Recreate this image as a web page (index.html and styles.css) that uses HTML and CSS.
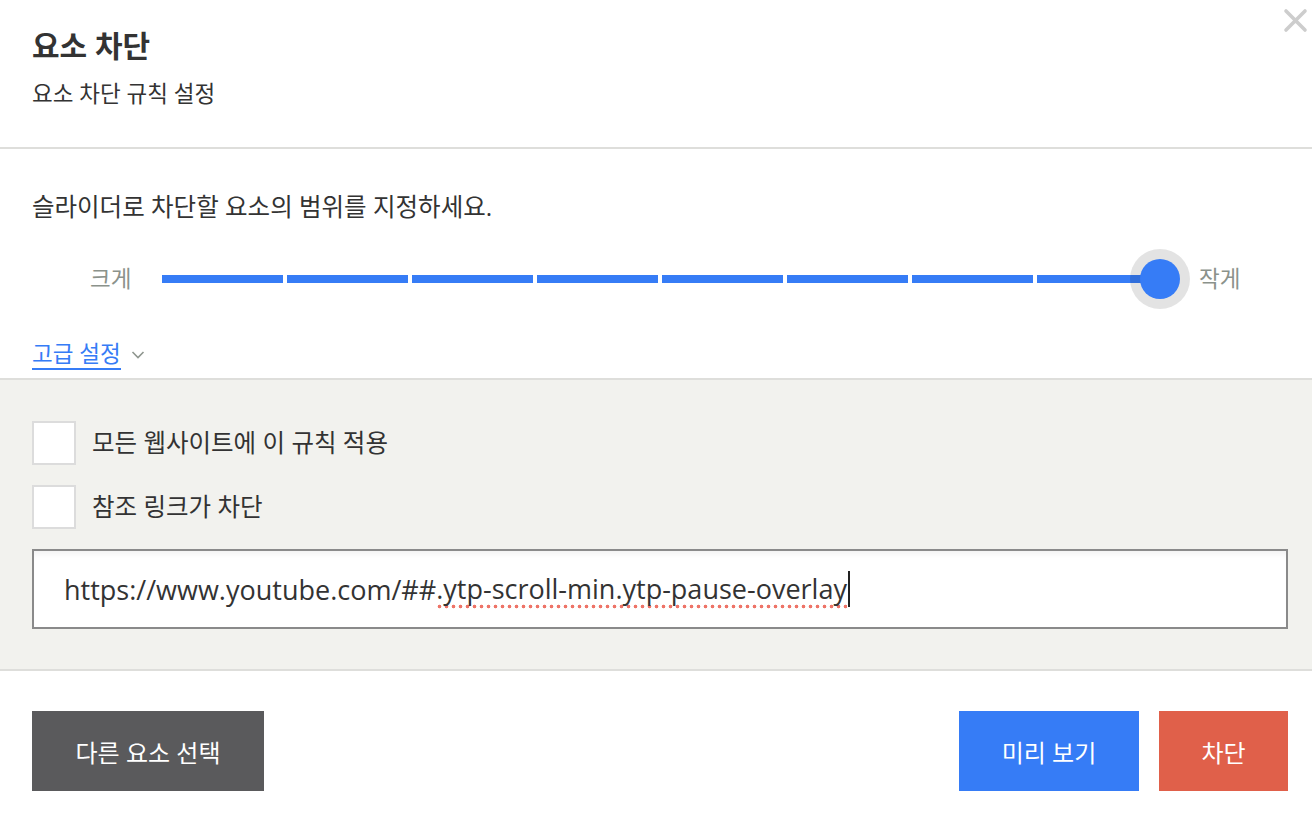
FILE: index.html
```html
<!DOCTYPE html>
<html lang="ko">
<head>
<meta charset="utf-8">
<title>요소 차단</title>
<link rel="stylesheet" href="styles.css">
</head>
<body>
<div class="dialog">
  <button class="close" aria-label="닫기">
    <svg width="25" height="25" viewBox="0 0 25 25"><path d="M3 3 L22 22 M22 3 L3 22" stroke="#cdcdcd" stroke-width="3.6" stroke-linecap="round" fill="none"/></svg>
  </button>
  <header class="head">
    <h1 class="title">요소 차단</h1>
    <p class="subtitle">요소 차단 규칙 설정</p>
  </header>
  <section class="main">
    <p class="hint">슬라이더로 차단할 요소의 범위를 지정하세요.</p>
    <div class="slider">
      <span class="slabel">크게</span>
      <div class="track">
        <span class="seg"></span><span class="seg"></span><span class="seg"></span><span class="seg"></span>
        <span class="seg"></span><span class="seg"></span><span class="seg"></span><span class="seg"></span>
        <span class="thumb"><span class="knob"></span></span>
      </div>
      <span class="slabel right">작게</span>
    </div>
    <div class="adv">
      <a class="advlink">고급 설정</a>
      <svg class="chev" width="14" height="10" viewBox="0 0 14 10"><path d="M1.5 2 L7 7.5 L12.5 2" stroke="#8f968f" stroke-width="1.6" fill="none"/></svg>
    </div>
  </section>
  <section class="advanced">
    <label class="check"><span class="box"></span><span class="ctext">모든 웹사이트에 이 규칙 적용</span></label>
    <label class="check"><span class="box"></span><span class="ctext">참조 링크가 차단</span></label>
    <div class="field">https://www.youtube.com/##<span class="spell">.ytp-scroll-min.ytp-pause-overlay</span><span class="caret"></span></div>
  </section>
  <footer class="foot">
    <button class="btn dark">다른 요소 선택</button>
    <div class="spacer"></div>
    <button class="btn blue">미리 보기</button>
    <button class="btn red">차단</button>
  </footer>
</div>
</body>
</html>
```
FILE: styles.css
```css
* { box-sizing: border-box; }
html, body { margin: 0; padding: 0; background: #fff; }
body {
  font-family: "Open Sans", "Noto Sans CJK KR", sans-serif;
  color: #333;
  width: 1312px;
  height: 822px;
  overflow: hidden;
}
.dialog { position: relative; width: 1312px; }
.close {
  position: absolute; top: 8px; right: 4px;
  width: 25px; height: 25px; padding: 0; border: 0; background: none;
}
.close svg { display: block; }
.head {
  padding: 29px 32px 38px;
  border-bottom: 2px solid #dededb;
}
.title {
  margin: 0; font-size: 30px; line-height: 34px; font-weight: 700; color: #333;
}
.subtitle {
  margin: 16px 0 0; font-size: 22.5px; line-height: 30px; color: #333;
}
.main { padding: 42px 32px 8px; }
.hint { margin: 0; font-size: 24.5px; line-height: 32px; }
.slider {
  display: flex; align-items: center; height: 60px; margin-top: 26px;
}
.slabel { font-size: 22.5px; color: #8b928b; margin-left: 58px; width: 42px; line-height: 30px; white-space: nowrap; }
.slabel.right { margin-left: 41px; }
.track {
  position: relative; display: flex; gap: 4px; width: 996px; height: 8px; margin-left: 30px;
}
.seg { flex: 1; background: #367cf6; }
.thumb {
  position: absolute; top: 50%; left: calc(100% + 2px);
  width: 60px; height: 60px; margin: -30px 0 0 -30px;
  border-radius: 50%; background: rgba(0,0,0,0.11);
  display: flex; align-items: center; justify-content: center;
}
.thumb::before {
  content: ""; position: absolute; left: 0; top: 26px; width: 30px; height: 8px; background: #367cf6; z-index: -1;
}
.knob { width: 40px; height: 40px; border-radius: 50%; background: #367cf6; }
.adv { display: flex; align-items: center; margin-top: 31px; gap: 10px; }
.advlink {
  font-size: 22.5px; line-height: 28px; color: #367cf6; border-bottom: 2px solid #367cf6; cursor: pointer;
}
.advanced {
  background: #f2f2ee;
  border-top: 2px solid #dededb;
  border-bottom: 2px solid #dededb;
  padding: 41px 24px 40px 32px;
  display: flex; flex-direction: column; gap: 20px;
}
.check { display: flex; align-items: center; gap: 16px; height: 44px; }
.box { width: 44px; height: 44px; background: #fff; border: 2px solid #dcdcdc; flex: none; }
.ctext { font-size: 24.5px; line-height: 30px; }
.field {
  height: 80px; background: #fff; border: 2px solid #8a8a8a;
  box-shadow: inset 0 8px 8px -6px rgba(0,0,0,0.07);
  padding: 0 30px; display: flex; align-items: center;
  font-size: 27px; color: #333; white-space: nowrap;
}
.spell {
  background-image: radial-gradient(circle, #ee7468 1.7px, transparent 2.1px);
  background-size: 7px 5px; background-repeat: repeat-x; background-position: 0 100%;
  padding-bottom: 2px;
}
.caret { display: inline-block; width: 2px; height: 36px; background: #222; margin-left: 1px; }
.foot { display: flex; padding: 40px 24px 0 32px; gap: 20px; }
.spacer { flex: 1; }
.btn {
  height: 80px; border: 0; color: #fff; font-family: inherit; font-size: 24px; padding: 0;
}
.btn.dark { background: #5a5a5c; width: 232px; }
.btn.blue { background: #367cf6; width: 180px; }
.btn.red { background: #e0604a; width: 129px; }
```
